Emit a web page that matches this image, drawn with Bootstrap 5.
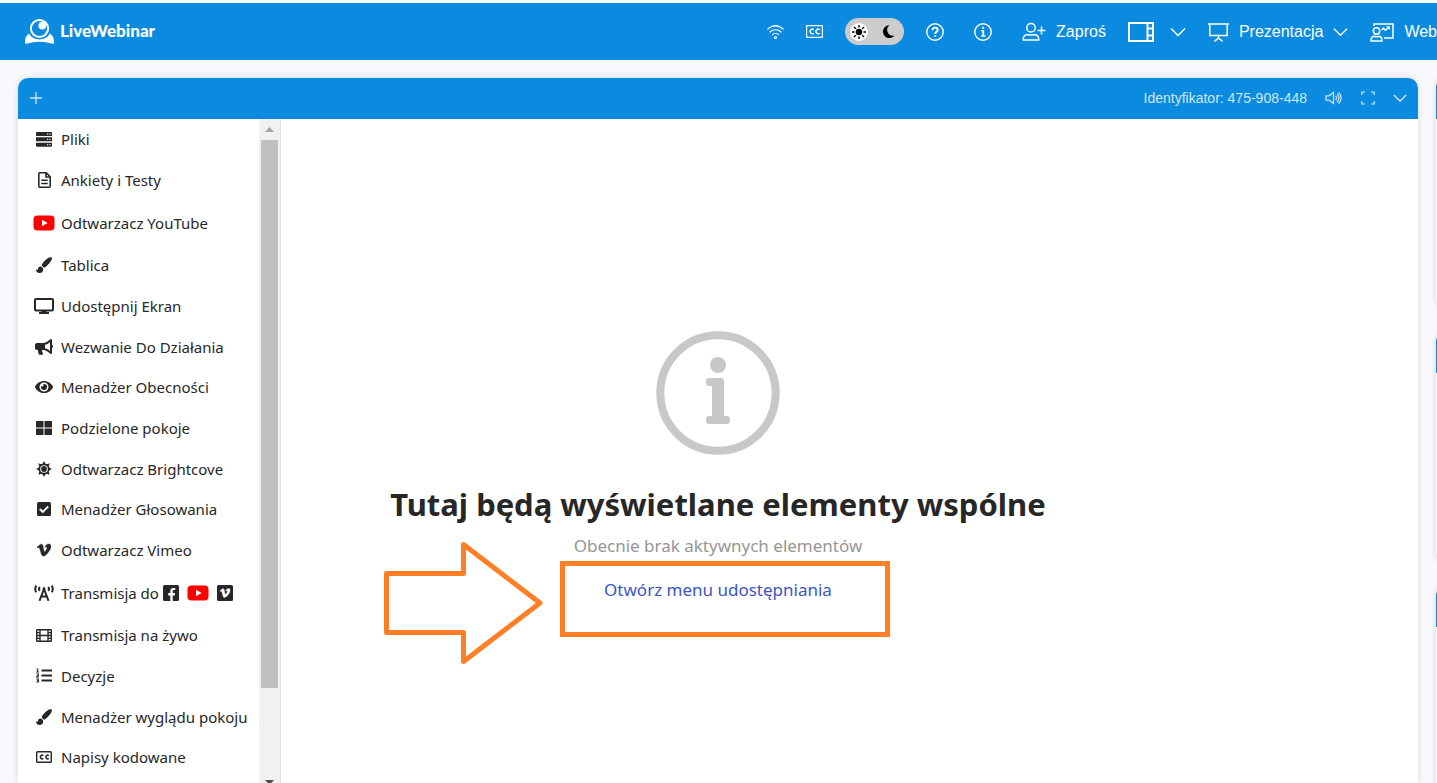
<!DOCTYPE html>
<html lang="pl">
<head>
<meta charset="utf-8">
<meta name="viewport" content="width=device-width, initial-scale=1">
<title>LiveWebinar</title>
<link rel="stylesheet" href="https://cdn.jsdelivr.net/npm/bootstrap@5.3.0/dist/css/bootstrap.min.css">
<style>
:root { --brand: #0b8bdf; --ink: #272727; }
body { font-family: "Noto Sans", sans-serif; color: var(--ink); background: #f8f9fc; border-top: 3px solid #fff; }
svg { display: block; flex: none; }
.topbar { background: var(--brand); height: 57px; padding-left: 24px; }
.topbar, .topbar button { color: #fff; font-family: "Liberation Sans", Arial, sans-serif; font-size: 16px; line-height: 24px; }
.plain { background: none; border: 0; padding: 0; color: inherit; display: flex; align-items: center; }
.brandname { font-family: Lato, sans-serif; font-weight: 900; font-size: 17px; line-height: 24px; color: #fff; padding-bottom: 2px; }
.tools { gap: 22px; }
.pair { gap: 10px; }
.theme-switch { width: 59px; height: 27px; border-radius: 14px; background: #ccc; padding: 0 9px 0 5px; justify-content: space-between; }
.stage { padding: 18px 0 0 18px; gap: 18px; }
.pane { background: #fff; border-radius: 10px 10px 0 0; box-shadow: 0 0 6px rgba(0,0,0,.14); }
.pane-head { background: var(--brand); height: 41px; border-radius: 10px 10px 0 0; padding: 0 11px 2px 12px; color: #d2e6f7; font-family: "Liberation Sans", Arial, sans-serif; font-size: 14px; line-height: 20px; }
.pane-tools { gap: 18px; }
.side-col { width: 240px; margin-right: -239px; gap: 24px; }
.side-pane { height: 230px; border-radius: 10px; }
.share-menu { width: 263px; border-right: 1px solid #e4e4e4; }
.share-menu ul { padding: 0 0 0 15px; }
.share-menu li { height: 41px; }
.share-menu li:nth-child(3n+1) { height: 40px; }
.share-menu li.tall { height: 45px; }
.share-menu a { color: var(--ink); font-size: 15px; line-height: 22px; }
.glyph { width: 22px; margin-right: 6px; display: flex; justify-content: center; }
.scroll-track { width: 21px; background: #f1f1f1; padding: 0 2px; }
.scroll-arrow { height: 21px; }
.scroll-thumb { width: 17px; height: 548px; background: #c1c1c1; }
.empty { padding-top: 212px; }
.empty h1 { font-size: 31px; line-height: 44px; margin: 27px 0 9px; font-weight: 700; }
.empty p { font-size: 17px; line-height: 22px; color: #969696; margin: 0 0 22px; }
.open-link { color: #3c55c8; font-size: 17px; line-height: 22px; }
.callout-box { left: -44px; right: -58px; top: -18px; height: 76px; border: 5px solid #ff7f27; pointer-events: none; }
.callout-arrow { left: -220px; top: -38px; pointer-events: none; }
</style>
</head>
<body class="vh-100 overflow-hidden d-flex flex-column">

<svg width="0" height="0" class="position-absolute" aria-hidden="true">
  <symbol id="yt" viewBox="0 0 22 16"><rect x=".5" y=".5" width="21" height="15" rx="4" fill="#f00"/><path d="M9 4.700v6.600l5.600-3.300z" fill="#fff"/></symbol>
  <symbol id="brush" viewBox="0 0 16 16"><path fill="currentColor" d="M14.200.2C11.500.6 7.600 4.300 6 7.300c-.3.700-.2 1.200.2 1.700l1.300 1.300c.5.500 1.100.5 1.700 0C12.300 8 15.600 4 16 1.600 16.100.6 15.300 0 14.200.2zM4.500 9.400C2.800 9.400 2 10.700 2 12c0 .7-.6.900-2 .4C0 14.600 1.600 16 3.800 16c2 0 3.400-1.400 3.400-3.400 0-1.700-1-3.200-2.700-3.200z"/></symbol>
  <symbol id="chev" viewBox="0 0 16 10"><path d="M1 1.500l7 7 7-7" fill="none" stroke="currentColor" stroke-width="1.500"/></symbol>
  <symbol id="vim" viewBox="0 0 448 512"><path stroke="currentColor" stroke-width="14" d="M447.800 153.600c-2 43.600-32.400 103.300-91.400 179.100-60.900 79.200-112.400 118.800-154.600 118.800-26.100 0-48.200-24.100-66.300-72.300C100.300 250 85.300 174.300 56.200 174.300c-3.400 0-15.100 7.100-35.200 21.100L0 168.200c51.600-45.300 100.900-95.700 131.800-98.500 34.900-3.400 56.300 20.500 64.400 71.500 28.700 181.500 41.400 208.900 93.600 126.700 18.700-29.600 28.800-52.100 30.200-67.600 4.800-45.900-35.800-42.800-63.300-31 22-72.100 64.100-107.100 126.200-105.100 45.800 1.200 67.500 31.100 64.900 89.400z"/></symbol>
</svg>

<header class="topbar d-flex align-items-center flex-shrink-0 overflow-hidden">
  <a href="#" class="d-flex align-items-center text-decoration-none me-auto">
    <svg width="32" height="28" viewBox="0 0 32 28" class="me-1" fill="#fff"><circle cx="15.500" cy="10.500" r="8.600" fill="none" stroke="#fff" stroke-width="2"/><circle cx="18.300" cy="7.600" r="3.900"/><path d="M5 15.500C2 17.500 1 20.500 1 24.500c0 1.200.7 1.500 1.700 1.200 8.500-2.700 17-2.700 25.600 0 1 .3 1.700 0 1.700-1.200 0-4-1-7-4-9-2 3.700-5.800 5.900-10.500 5.900S7 19.200 5 15.500z"/></svg>
    <span class="brandname">LiveWebinar</span>
  </a>
  <nav class="tools d-flex align-items-center flex-shrink-0" aria-label="Narzędzia">
    <button class="plain" aria-label="Połączenie"><svg width="17" height="16" viewBox="0 0 17 16" fill="none" stroke="currentColor" stroke-width="1.100" stroke-linecap="round"><path d="M.8 5.200a11 11 0 0 1 15.400 0M3 8a7.700 7.700 0 0 1 11 0M5.500 10.700a4.300 4.300 0 0 1 6 0M4.500 2.400a11.500 11.500 0 0 1 8 0"/><circle cx="8.500" cy="13.500" r="1"/></svg></button>
    <button class="plain" aria-label="Napisy"><svg width="17" height="13" viewBox="0 0 17 13" fill="none" stroke="currentColor"><rect x=".6" y=".6" width="15.800" height="11.800" rx=".5" stroke-width="1.200"/><path stroke-width="1.400" d="M7.900 4.700a2.300 2.300 0 1 0 0 3.600M13.700 4.700a2.300 2.300 0 1 0 0 3.600"/></svg></button>
    <button class="plain theme-switch" aria-label="Motyw">
      <svg width="18" height="18" viewBox="0 0 18 18"><circle cx="9" cy="9" r="9" fill="#fff"/><circle cx="9" cy="9" r="3.300"/><g stroke="#000" stroke-width="1.400"><path d="M9 2v2.500M9 13.500V16M2 9h2.500M13.500 9H16M4 4l1.800 1.800M12.200 12.200L14 14M14 4l-1.800 1.800M5.800 12.200L4 14"/></g></svg>
      <svg width="12" height="13" viewBox="0 0 12 13"><path d="M6.500.3A6.400 6.400 0 1 0 11.500 10.500A5.800 5.800 0 0 1 6.500.3z"/></svg>
    </button>
    <button class="plain" aria-label="Pomoc"><svg width="18" height="18" viewBox="0 0 18 18" fill="none" stroke="currentColor"><circle cx="9" cy="9" r="8.200" stroke-width="1.400"/><path stroke-width="1.900" d="M6.500 7.200c0-3.600 5.200-3.200 5.200-.3 0 2-2.500 1.800-2.500 4"/><circle cx="9.200" cy="13" r="1.100" fill="currentColor" stroke="none"/></svg></button>
    <button class="plain px-2" aria-label="Informacje"><svg width="18" height="18" viewBox="0 0 18 18" fill="none" stroke="currentColor"><circle cx="9" cy="9" r="8.200" stroke-width="1.400"/><path stroke-width="1.900" d="M9.200 7.400v5.500"/><path stroke-width="1.300" d="M7 7.600h3M7 13h4.500"/><circle cx="9.100" cy="4.900" r="1.200" fill="currentColor" stroke="none"/></svg></button>
    <button class="plain pair"><svg width="24" height="19" viewBox="0 0 24 19" fill="none" stroke="currentColor" stroke-width="1.500"><circle cx="9" cy="5.700" r="4.300"/><path d="M1.200 18c0-3.500 2-5.400 4.600-5.400 1.300.6 5 .6 6.400 0 2.600 0 4.600 1.900 4.600 5.400zM15.500 8.600h8M19.500 4.600v8"/></svg>Zaproś</button>
    <button class="plain" aria-label="Układ"><svg width="26" height="20" viewBox="0 0 26 20" fill="none" stroke="currentColor"><rect x="1" y="1" width="24" height="18" stroke-width="2"/><path d="M19.500 1v18M19.500 6.500H25M19.500 13.500H25" stroke-width="2"/></svg><svg width="16" height="10" class="ms-3"><use href="#chev"/></svg></button>
    <button class="plain pair"><svg width="21" height="20" viewBox="0 0 21 20" fill="none" stroke="currentColor" stroke-width="1.500"><path d="M0 2h21M1.800 2v11.500h17.400V2M10.500 13.500V17M6.500 19.300l4-3.300 4 3.300"/></svg>Prezentacja<svg width="15" height="10"><use href="#chev"/></svg></button>
    <button class="plain pair"><svg width="24" height="20" viewBox="0 0 24 20" fill="none" stroke="currentColor" stroke-width="1.500"><path d="M4 4V2h19v14h-9"/><circle cx="6.500" cy="9" r="3.200"/><path d="M1 19c0-3 1.600-4.700 3.500-4.700 1 .5 3 .5 4 0 2 0 3.500 1.700 3.500 4.700zM11.500 8l2-1.800 2 2L19 5"/><path d="M16.500 4.500h3v3z" fill="currentColor" stroke-width=".5"/></svg>Web</button>
  </nav>
</header>

<main class="stage d-flex flex-grow-1 overflow-hidden">
  <section class="pane flex-grow-1 d-flex flex-column">
    <div class="pane-head d-flex align-items-center justify-content-between flex-shrink-0">
      <button class="plain" aria-label="Dodaj"><svg width="12" height="12" viewBox="0 0 12 12" stroke="currentColor" stroke-width="1.300"><path d="M6 0v12M0 6h12"/></svg></button>
      <div class="pane-tools d-flex align-items-center">
        <span>Identyfikator: 475-908-448</span>
        <button class="plain" aria-label="Dźwięk"><svg width="18" height="14" viewBox="0 0 18 14" fill="none" stroke="currentColor" stroke-width="1.200"><path d="M1 4.800h3.200L8.500 1.500v11L4.200 9.200H1zM10.500 4.800a3 3 0 0 1 0 4.400M12 2.900a5.500 5.500 0 0 1 0 8.200M13.600 1.200a8 8 0 0 1 0 11.600"/></svg></button>
        <button class="plain" aria-label="Pełny ekran"><svg width="14" height="14" viewBox="0 0 14 14" fill="none" stroke="currentColor" stroke-width="1.200"><path d="M.8 4V1H4M10 1h3.200v3M13.200 10v3H10M4 13H.8v-3"/></svg></button>
        <button class="plain" aria-label="Zwiń"><svg width="14" height="10"><use href="#chev"/></svg></button>
      </div>
    </div>
    <div class="position-relative flex-grow-1">
      <nav class="share-menu position-absolute top-0 start-0 h-100 d-flex overflow-hidden bg-white" aria-label="Menu udostępniania">
        <ul class="list-unstyled m-0 flex-grow-1 text-nowrap">
          <li class="d-flex align-items-center"><span class="glyph"><svg width="16" height="15" viewBox="0 0 16 15"><path fill="currentColor" d="M1 0h14a1 1 0 0 1 1 1v3H0V1a1 1 0 0 1 1-1zM0 5.300h16v4H0zM0 10.700h16v3a1 1 0 0 1-1 1H1a1 1 0 0 1-1-1z"/><path fill="#dfe6f5" d="M11 1.500h1.200v1.200H11zM13.300 1.500h1.200v1.200h-1.200zM11 6.700h1.200v1.200H11zM13.300 6.700h1.200v1.200h-1.200zM11 12h1.200v1.200H11zM13.300 12h1.200v1.200h-1.200z"/></svg></span><a href="#" class="text-decoration-none">Pliki</a></li>
          <li class="d-flex align-items-center"><span class="glyph"><svg width="13" height="16" viewBox="0 0 13 16" fill="none" stroke="currentColor" stroke-width="1.600"><path d="M1.800.8h6.400l4 4v9.400a1 1 0 0 1-1 1H1.800a1 1 0 0 1-1-1V1.800a1 1 0 0 1 1-1zM8 1v4h4M3.300 8.300h6.400M3.300 11.500h6.400"/></svg></span><a href="#" class="text-decoration-none">Ankiety i Testy</a></li>
          <li class="tall d-flex align-items-center"><span class="glyph"><svg width="22" height="16"><use href="#yt"/></svg></span><a href="#" class="text-decoration-none">Odtwarzacz YouTube</a></li>
          <li class="d-flex align-items-center"><span class="glyph"><svg width="16" height="16"><use href="#brush"/></svg></span><a href="#" class="text-decoration-none">Tablica</a></li>
          <li class="d-flex align-items-center"><span class="glyph"><svg width="20" height="16" viewBox="0 0 20 16"><rect x="1" y="1" width="18" height="11.500" rx="1" fill="none" stroke="currentColor" stroke-width="2"/><path fill="currentColor" d="M8 12h4l.5 2H15v2H5v-2h2.500z"/></svg></span><a href="#" class="text-decoration-none">Udostępnij Ekran</a></li>
          <li class="d-flex align-items-center"><span class="glyph"><svg width="18" height="16" viewBox="0 0 576 512"><path fill="currentColor" d="M576 240c0-24-13-44-32-55V32c0-9-7-32-32-32-7 0-14 2-20 7l-85 68c-43 34-96 53-151 53H64c-35 0-64 29-64 64v96c0 35 29 64 64 64h34a257 257 0 0 0 25 137c5 11 17 18 29 18h74c26 0 42-30 26-51a127 127 0 0 1-24-104h28c55 0 108 19 151 53l85 68c6 5 13 7 20 7 25 0 32-22 32-32V295c19-11 32-31 32-55zM480 381l-33-27a306 306 0 0 0-127-59V185c46-9 90-29 127-59l33-27z"/></svg></span><a href="#" class="text-decoration-none">Wezwanie Do Działania</a></li>
          <li class="d-flex align-items-center"><span class="glyph"><svg width="18" height="16" viewBox="0 0 576 512"><path fill="currentColor" d="M572.500 241.400C518.300 135.600 410.900 64 288 64S57.700 135.600 3.500 241.400a32.400 32.400 0 0 0 0 29.200C57.700 376.400 165.100 448 288 448s230.300-71.600 284.500-177.400a32.400 32.400 0 0 0 0-29.200zM288 400a144 144 0 1 1 144-144 143.900 143.900 0 0 1-144 144zm0-240a95.300 95.300 0 0 0-25.300 3.800 47.900 47.900 0 0 1-66.900 66.900A95.800 95.800 0 1 0 288 160z"/></svg></span><a href="#" class="text-decoration-none">Menadżer Obecności</a></li>
          <li class="d-flex align-items-center"><span class="glyph"><svg width="16" height="14" viewBox="0 0 16 14"><path fill="currentColor" d="M0 .5A.5.500 0 0 1 .5 0h7v6.500H0zM8.500 0h7a.5.500 0 0 1 .5.500v6H8.500zM0 7.500h7.500V14h-7a.5.500 0 0 1-.5-.5zM8.500 7.500H16v6a.5.500 0 0 1-.5.500h-7z"/></svg></span><a href="#" class="text-decoration-none">Podzielone pokoje</a></li>
          <li class="d-flex align-items-center"><span class="glyph"><svg width="16" height="16" viewBox="0 0 16 16"><circle cx="8" cy="8" r="4.700" fill="none" stroke="currentColor" stroke-width="1.700"/><circle cx="8" cy="8" r="2.900" fill="currentColor"/><path fill="currentColor" d="M8 0l1.800 3.500H6.200zM8 16l-1.800-3.500h3.600zM0 8l3.500-1.800v3.600zM16 8l-3.500 1.800V6.200zM2.300 2.300l3.800 1.200-2.600 2.600zM13.700 2.300l-1.200 3.800-2.600-2.600zM13.700 13.700l-3.800-1.200 2.600-2.600zM2.300 13.700l1.200-3.800 2.600 2.600z"/></svg></span><a href="#" class="text-decoration-none">Odtwarzacz Brightcove</a></li>
          <li class="d-flex align-items-center"><span class="glyph"><svg width="14" height="14" viewBox="0 0 14 14"><rect width="14" height="14" rx="1.500" fill="currentColor"/><path d="M2.800 7l3 3 5.400-5.500" fill="none" stroke="#fff" stroke-width="1.900"/></svg></span><a href="#" class="text-decoration-none">Menadżer Głosowania</a></li>
          <li class="d-flex align-items-center"><span class="glyph"><svg width="14" height="16" fill="currentColor"><use href="#vim"/></svg></span><a href="#" class="text-decoration-none">Odtwarzacz Vimeo</a></li>
          <li class="tall d-flex align-items-center"><span class="glyph"><svg width="20" height="16" viewBox="0 0 20 16" fill="none" stroke="currentColor" stroke-width="2"><path d="M5.500 15.800L10 4l4.500 11.800M7 11.500h6"/><circle cx="10" cy="4" r="1.500" fill="currentColor" stroke="none"/><path d="M2.300.6a6 6 0 0 0 0 6.600M17.700.6a6 6 0 0 1 0 6.600M5.800 2a3 3 0 0 0 0 3.800M14.200 2a3 3 0 0 1 0 3.800"/></svg></span><a href="#" class="text-decoration-none d-flex align-items-center">Transmisja do
            <svg width="16" height="16" viewBox="0 0 16 16" class="ms-1"><rect width="16" height="16" rx="1.500" fill="currentColor"/><path fill="#fff" d="M7.300 16v-5.500H5.200V8h2.100V6.300c0-2.200 1.200-3.400 3.200-3.400l1.700.1v2.100h-1c-1.200 0-1.500.6-1.500 1.300V8h2.400l-.4 2.500h-2V16z"/></svg>
            <svg width="22" height="16" class="mx-2"><use href="#yt"/></svg>
            <svg width="16" height="16" viewBox="0 0 16 16"><rect width="16" height="16" rx="1.500" fill="currentColor"/><use href="#vim" x="2.500" y="2" width="11" height="12" fill="#fff" color="#fff"/></svg></a></li>
          <li class="d-flex align-items-center"><span class="glyph"><svg width="16" height="13" viewBox="0 0 16 13" fill="none" stroke="currentColor" stroke-width="1.400"><rect x=".7" y=".7" width="14.600" height="11.600" rx=".5"/><path d="M4 .5v12M12 .5v12M4 6.500h8M1 3.600h3M1 6.500h3M1 9.400h3M12 3.600h3M12 6.500h3M12 9.400h3"/></svg></span><a href="#" class="text-decoration-none">Transmisja na żywo</a></li>
          <li class="d-flex align-items-center"><span class="glyph"><svg width="16" height="15" viewBox="0 0 16 15" fill="none" stroke="currentColor"><path stroke-width="2" d="M5.500 2.500H16M5.500 7.500H16M5.500 12.500H16"/><path stroke-width="1.100" d="M.7 1h1v3M.3 4h2.700M.4 6h2v1.200L.6 9H3M.4 11h2v1.500H1h1.500V14H.3"/></svg></span><a href="#" class="text-decoration-none">Decyzje</a></li>
          <li class="d-flex align-items-center"><span class="glyph"><svg width="16" height="16"><use href="#brush"/></svg></span><a href="#" class="text-decoration-none">Menadżer wyglądu pokoju</a></li>
          <li class="d-flex align-items-center"><span class="glyph"><svg width="16" height="12" viewBox="0 0 16 12" fill="none" stroke="currentColor"><rect x=".7" y=".7" width="14.600" height="10.600" rx=".8" stroke-width="1.400"/><path stroke-width="1.600" d="M7.300 4.600a1.800 1.800 0 1 0 0 2.800M12.800 4.600a1.800 1.800 0 1 0 0 2.800"/></svg></span><a href="#" class="text-decoration-none">Napisy kodowane</a></li>
        </ul>
        <div class="scroll-track d-flex flex-column flex-shrink-0" aria-hidden="true">
          <div class="scroll-arrow d-flex align-items-center justify-content-center flex-shrink-0"><svg width="9" height="5" viewBox="0 0 9 5"><path d="M4.500 0L9 5H0z" fill="#a3a3a3"/></svg></div>
          <div class="scroll-thumb flex-shrink-0"></div>
          <div class="mt-auto d-flex justify-content-center"><svg width="9" height="3" viewBox="0 0 9 3"><path d="M0 0h9L6.300 3H2.700z" fill="#505050"/></svg></div>
        </div>
      </nav>

      <div class="empty d-flex flex-column align-items-center text-center">
        <svg width="124" height="124" viewBox="0 0 124 124" fill="#c8c8c8"><circle cx="62" cy="62" r="57.700" fill="none" stroke="#c8c8c8" stroke-width="8"/><circle cx="62" cy="34" r="8"/><path d="M53 47h12a3 3 0 0 1 3 3v35h3a3 3 0 0 1 3 3v2a3 3 0 0 1-3 3H53a3 3 0 0 1-3-3v-2a3 3 0 0 1 3-3h3V55h-3a3 3 0 0 1-3-3v-2a3 3 0 0 1 3-3z"/></svg>
        <h1>Tutaj będą wyświetlane elementy wspólne</h1>
        <p>Obecnie brak aktywnych elementów</p>
        <div class="position-relative">
          <a href="#" class="open-link d-block text-decoration-none">Otwórz menu udostępniania</a>
          <div class="callout-box position-absolute"></div>
          <svg class="callout-arrow position-absolute" width="160" height="124" viewBox="0 0 160 124" fill="none" stroke="#ff7f27" stroke-width="5"><path stroke-linejoin="round" d="M2.500 32.500h77V3.500L156 62 79.500 120.500V91.500h-77z"/></svg>
        </div>
      </div>
    </div>
  </section>

  <aside class="side-col d-flex flex-column flex-shrink-0">
    <div class="pane side-pane flex-shrink-0"><div class="pane-head"></div></div>
    <div class="pane side-pane flex-shrink-0"><div class="pane-head"></div></div>
    <div class="pane side-pane flex-shrink-0"><div class="pane-head"></div></div>
  </aside>
</main>
<script src="https://cdn.jsdelivr.net/npm/bootstrap@5.3.0/dist/js/bootstrap.bundle.min.js"></script>
</body>
</html>
